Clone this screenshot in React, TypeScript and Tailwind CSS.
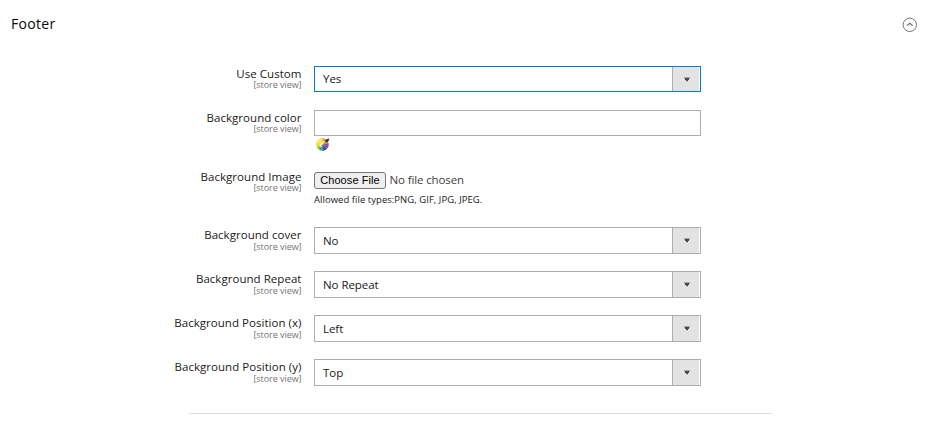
import React from "react";

function Label({ text, low = false }: { text: string; low?: boolean }) {
  return (
    <div className="w-[301.5px] shrink-0 text-right">
      <div className="whitespace-nowrap pt-[2px] text-[11.5px] leading-[12px] tracking-[0.04px] text-[#202020]">{text}</div>
      <div
        className={`whitespace-nowrap text-[9px] leading-[10px] tracking-[-0.05px] text-[#747474] ${low ? "pt-px" : ""}`}
      >
        [store view]
      </div>
    </div>
  );
}

function Select({ value, active = false }: { value: string; active?: boolean }) {
  return (
    <div
      className={`flex w-[387px] border bg-white pr-px ${active ? "h-[26px] border-[#007bdb]" : "h-[27px] border-[#adadad]"}`}
    >
      <div className={`flex-1 pl-2 text-[11.5px] tracking-[-0.05px] text-[#202020] ${active ? "leading-[24px]" : "leading-[25px]"}`}>
        {value}
      </div>
      <div className="w-[27px] border-l border-[#adadad] bg-[#e3e3e3] pl-[11px] pt-[10px]">
        <svg width="6" height="5" viewBox="0 0 6 5" shapeRendering="crispEdges">
          <path d="M0 0h6v1H0z" fill="#a9a6a3" />
          <path d="M1 1h4v2H1z" fill="#514943" />
          <path d="M0 1h1v1H0zM5 1h1v1H5z" fill="#b8b5b2" />
          <path d="M2 3h2v1H2z" fill="#514943" />
          <path d="M2 4h2v1H2z" fill="#c4c2c0" />
        </svg>
      </div>
    </div>
  );
}

function ColorWheel() {
  return (
    <svg width="16" height="14" viewBox="0 0 16 14" className="ml-px mt-px">
      <circle cx="7.5" cy="7.5" r="6.2" fill="#f6d51f" />
      <path d="M7.5 7.5 1.5 6a6.2 6.2 0 0 1 6-4.7z" fill="#fbe95a" />
      <path d="M7.5 7.5V1.3a6.2 6.2 0 0 1 4.3 1.8z" fill="#fba03a" />
      <path d="M7.5 7.5 1.5 6a6.2 6.2 0 0 0 .4 4z" fill="#f3df3c" />
      <path d="M7.5 7.5 1.9 10a6.2 6.2 0 0 0 2 2.5z" fill="#8fca48" />
      <path d="M7.5 7.5 3.9 12.5a6.2 6.2 0 0 0 3.6 1.2z" fill="#2fa8a4" />
      <path d="M7.5 7.5v6.2a6.2 6.2 0 0 0 4.6-2z" fill="#3154b4" />
      <path d="m7.5 7.5 4.6 4.2a6.2 6.2 0 0 0 1.4-5.8z" fill="#8a48bb" />
      <path d="m5.4 9.4 4.6-4.6" stroke="#fbf3ec" strokeWidth="2.6" />
      <path d="m6.6 9.2 4.6-4.6" stroke="#7a7276" strokeWidth="1.1" />
      <path d="m9.6 3.6 2.4 2.4 1.8-2.4.6-2.2-2.4.6z" fill="#3b383b" />
    </svg>
  );
}

export default function App() {
  return (
    <div className="h-[429px] w-[932px] overflow-hidden bg-white font-['Open_Sans',sans-serif]">
      <header className="flex h-[66px] items-start justify-between pl-[11px] pr-[15px] pt-[14px]">
        <h2 className="text-[14px] leading-[20px] tracking-[0.3px] text-[#080808]">Footer</h2>
        <svg width="15" height="15" viewBox="0 0 15 15" fill="none" stroke="#6b6460" className="mt-[3px]">
          <circle cx="7.8" cy="7.8" r="6.7" strokeWidth="0.9" />
          <path d="m4.9 8.6 2.9-2.3 2.9 2.3" strokeWidth="1.1" />
        </svg>
      </header>
      <main>
        <div className="flex h-[44px] gap-[12.5px]">
          <Label text="Use Custom" />
          <Select value="Yes" active />
        </div>
        <div className="flex h-[59px] gap-[12.5px]">
          <Label text="Background color" />
          <div>
            <div className="h-[26px] w-[387px] border border-[#adadad]" />
            <ColorWheel />
          </div>
        </div>
        <div className="flex h-[58px] gap-[12.5px]">
          <Label text="Background Image" />
          <div className="pt-[3px]">
            <div className="flex h-[17px] items-start">
              <button className="h-[17px] w-[72px] whitespace-nowrap rounded-[3px] border border-[#767676] bg-[#efefef] font-['Liberation_Sans',sans-serif] text-[11px] leading-[15px] tracking-[0.08px] text-black">
                Choose File
              </button>
              <span className="ml-[3.5px] text-[11.5px] leading-[16px] tracking-[-0.12px] text-[#414141]">
                No file chosen
              </span>
            </div>
            <p className="mt-[4px] text-[9.5px] leading-[14px] tracking-[0.04px] text-[#202020]">
              Allowed file types:PNG, GIF, JPG, JPEG.
            </p>
          </div>
        </div>
        <div className="flex h-[44px] gap-[12.5px]">
          <Label text="Background cover" low />
          <Select value="No" />
        </div>
        <div className="flex h-[44px] gap-[12.5px]">
          <Label text="Background Repeat" low />
          <Select value="No Repeat" />
        </div>
        <div className="flex h-[44px] gap-[12.5px]">
          <Label text="Background Position (x)" low />
          <Select value="Left" />
        </div>
        <div className="flex h-[54px] gap-[12.5px]">
          <Label text="Background Position (y)" low />
          <Select value="Top" />
        </div>
        <div className="ml-[189px] w-[583px] border-t border-[#dcdcdc]" />
      </main>
    </div>
  );
}
